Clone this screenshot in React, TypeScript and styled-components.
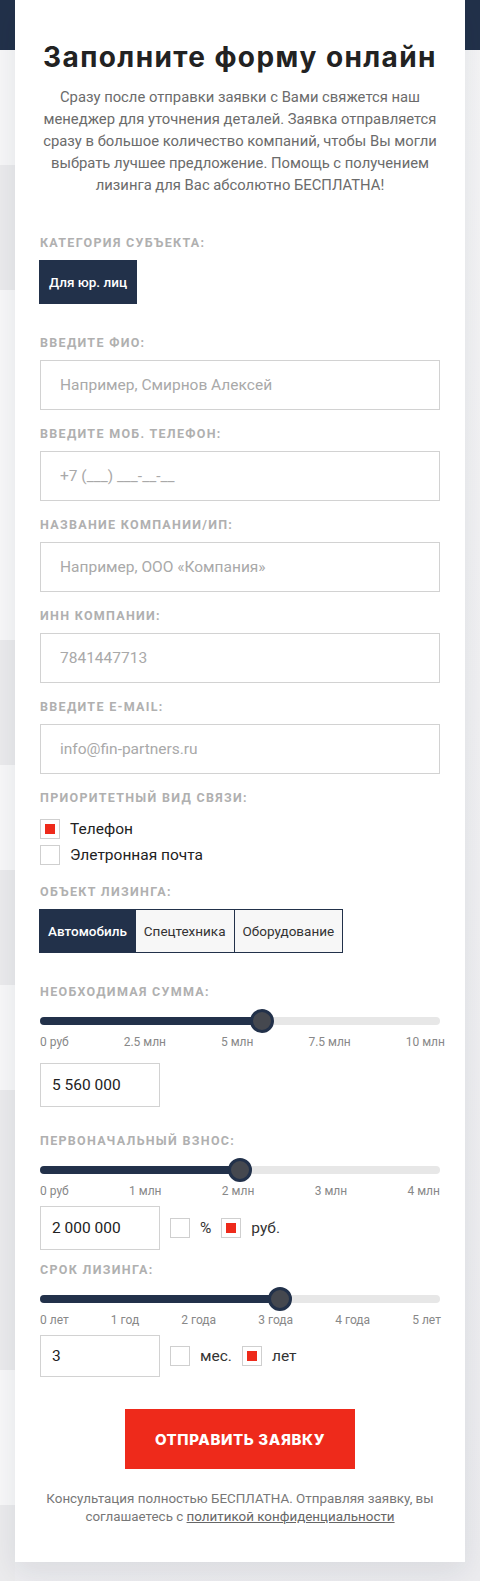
import styled, { createGlobalStyle } from "styled-components";

const NAVY = "#22314a";
const RED = "#ee2a1b";

const GlobalStyle = createGlobalStyle`
  html, body {
    margin: 0;
    padding: 0;
  }
  body {
    font-family: Roboto, "Liberation Sans", sans-serif;
    color: #222;
  }
  * {
    box-sizing: border-box;
  }
`;

const Page = styled.div`
  min-height: 1581px;
  padding: 0 15px 17px;
  background:
    linear-gradient(${NAVY}, ${NAVY}) top left / 100% 50px no-repeat,
    linear-gradient(
        to bottom,
        #f7f7f8 0 165px,
        #ebebed 165px 290px,
        #f8f8f9 290px 640px,
        #ebebed 640px 765px,
        #f8f8f9 765px 870px,
        #ebebed 870px 985px,
        #f8f8f9 985px 1090px,
        #ebebed 1090px 1370px,
        #f8f8f9 1370px 1505px,
        #ebebed 1505px
      )
      top left / 15px 100% no-repeat,
    linear-gradient(160deg, #f6f6f7 0%, #f1f1f3 50%, #ececef 100%);
`;

const Card = styled.form`
  background: #fff;
  padding: 40px 25px 36px;
  box-shadow: 0 10px 28px rgba(20, 30, 50, 0.09);
`;

const Title = styled.h2`
  margin: 0;
  font-family: Inter, "Open Sans", sans-serif;
  font-weight: 700;
  font-size: 28px;
  line-height: 34px;
  letter-spacing: 1.4px;
  text-align: center;
  white-space: nowrap;
  color: #222;
`;

const Lead = styled.p`
  margin: 12px 0 0;
  font-size: 14.8px;
  line-height: 22px;
  text-align: center;
  color: #6b6b6b;
`;

const Label = styled.div<{ $top?: number }>`
  margin-top: ${(p) => p.$top ?? 0}px;
  margin-bottom: 9px;
  font-size: 12.5px;
  line-height: 16px;
  font-weight: 700;
  letter-spacing: 1.3px;
  text-transform: uppercase;
  color: #b0b0b0;
`;

const SubjectButton = styled.button`
  display: block;
  height: 44px;
  margin-top: 1px;
  margin-left: -1px;
  padding: 0 10px;
  border: none;
  background: ${NAVY};
  color: #fff;
  font-family: inherit;
  font-size: 13.5px;
  font-weight: 500;
`;

const Field = styled.div`
  margin-bottom: 16px;
`;

const TextInput = styled.input<{ $w?: number; $h?: number; $pad?: number }>`
  display: block;
  width: ${(p) => (p.$w ? `${p.$w}px` : "100%")};
  height: ${(p) => p.$h ?? 50}px;
  padding: 0 ${(p) => p.$pad ?? 19}px;
  border: 1px solid #d2d2d2;
  background: #fff;
  font-family: inherit;
  font-size: 15.5px;
  color: #222;
  outline: none;

  &::placeholder {
    color: #a9a9a9;
  }
`;

const CheckRow = styled.label<{ $top?: number }>`
  display: flex;
  align-items: center;
  gap: 10px;
  margin-top: ${(p) => p.$top ?? 0}px;
  font-size: 15.5px;
  line-height: 20px;
  color: #222;
`;

const Box = styled.span<{ $checked?: boolean }>`
  position: relative;
  flex: none;
  width: 20px;
  height: 20px;
  border: 1px solid #cfcfcf;
  background: #fff;

  &::after {
    content: "";
    display: ${(p) => (p.$checked ? "block" : "none")};
    position: absolute;
    left: 4px;
    top: 4px;
    width: 10px;
    height: 10px;
    background: ${RED};
  }
`;

const Tabs = styled.div`
  display: flex;
  margin-left: -1px;
`;

const Tab = styled.button<{ $active?: boolean }>`
  height: 44px;
  padding: 0 8px;
  margin-left: -1px;
  border: 1px solid ${NAVY};
  background: ${(p) => (p.$active ? NAVY : "#f7f7f7")};
  color: ${(p) => (p.$active ? "#fff" : "#333")};
  font-family: inherit;
  font-size: 13.5px;
  font-weight: ${(p) => (p.$active ? 500 : 400)};

  &:first-child {
    margin-left: 0;
  }
`;

const Track = styled.div`
  position: relative;
  height: 24px;
  margin-top: 9px;
`;

const Rail = styled.div`
  position: absolute;
  left: 0;
  right: 0;
  top: 8px;
  height: 8px;
  border-radius: 4px;
  background: #e7e7e7;
`;

const Fill = styled.div`
  position: absolute;
  left: 0;
  top: 8px;
  height: 8px;
  border-radius: 4px;
  background: ${NAVY};
`;

const Thumb = styled.div`
  position: absolute;
  top: 0;
  width: 24px;
  height: 24px;
  margin-left: -12px;
  border-radius: 50%;
  border: 3px solid ${NAVY};
  background: #45484f;
`;

const Ticks = styled.div<{ $overhang?: number }>`
  display: flex;
  justify-content: space-between;
  margin-top: 2px;
  margin-right: -${(p) => p.$overhang ?? 0}px;
  font-size: 12px;
  line-height: 14px;
  color: #888;
`;

const ValueRow = styled.div<{ $top: number }>`
  display: flex;
  align-items: center;
  margin-top: ${(p) => p.$top}px;
`;

const UnitPick = styled.label`
  display: flex;
  align-items: center;
  gap: 10px;
  margin-left: 10px;
  font-size: 15.5px;
  color: #333;
`;

const Submit = styled.button`
  display: block;
  width: 230px;
  height: 60px;
  margin: 32px auto 0;
  border: none;
  background: ${RED};
  color: #fff;
  font-family: Inter, "Open Sans", sans-serif;
  font-size: 15px;
  font-weight: 800;
  letter-spacing: 0.6px;
  text-transform: uppercase;
`;

const Note = styled.p`
  margin: 21px 0 0;
  font-size: 13.4px;
  line-height: 18px;
  text-align: center;
  color: #777;

  a {
    color: #666;
    text-decoration: underline;
  }
`;

type SliderProps = {
  part: number;
  ticks: string[];
  overhang?: number;
};

const Slider = ({ part, ticks, overhang }: SliderProps) => (
  <>
    <Track>
      <Rail />
      <Fill style={{ width: `${part * 100}%` }} />
      <Thumb style={{ left: `${part * 100}%` }} />
    </Track>
    <Ticks $overhang={overhang}>
      {ticks.map((t) => (
        <span key={t}>{t}</span>
      ))}
    </Ticks>
  </>
);

const fields = [
  { label: "Введите ФИО:", placeholder: "Например, Смирнов Алексей" },
  { label: "Введите моб. телефон:", placeholder: "+7 (___) ___-__-__" },
  { label: "Название компании/ИП:", placeholder: "Например, ООО «Компания»" },
  { label: "ИНН компании:", placeholder: "7841447713" },
  { label: "Введите e-mail:", placeholder: "info@fin-partners.ru" },
];

const App = () => {
  return (
    <>
      <GlobalStyle />
      <Page>
        <Card onSubmit={(e) => e.preventDefault()}>
          <Title>Заполните форму онлайн</Title>
          <Lead>
            Сразу после отправки заявки с Вами свяжется наш
            <br />
            менеджер для уточнения деталей. Заявка отправляется
            <br />
            сразу в большое количество компаний, чтобы Вы могли
            <br />
            выбрать лучшее предложение. Помощь с получением
            <br />
            лизинга для Вас абсолютно БЕСПЛАТНА!
          </Lead>

          <Label $top={39}>Категория субъекта:</Label>
          <SubjectButton type="button">Для юр. лиц</SubjectButton>

          <Label $top={31}>{fields[0].label}</Label>
          {fields.map((f, i) => (
            <Field key={f.label}>
              {i > 0 && <Label>{f.label}</Label>}
              <TextInput placeholder={f.placeholder} />
            </Field>
          ))}

          <Label>Приоритетный вид связи:</Label>
          <CheckRow $top={13}>
            <Box $checked />
            Телефон
          </CheckRow>
          <CheckRow $top={6}>
            <Box />
            Элетронная почта
          </CheckRow>

          <Label $top={19}>Объект лизинга:</Label>
          <Tabs>
            <Tab type="button" $active>
              Автомобиль
            </Tab>
            <Tab type="button">Спецтехника</Tab>
            <Tab type="button">Оборудование</Tab>
          </Tabs>

          <Label $top={31}>Необходимая сумма:</Label>
          <Slider
            part={0.556}
            overhang={5}
            ticks={["0 руб", "2.5 млн", "5 млн", "7.5 млн", "10 млн"]}
          />
          <ValueRow $top={14}>
            <TextInput $w={120} $h={44} $pad={11} defaultValue="5 560 000" />
          </ValueRow>

          <Label $top={26}>Первоначальный взнос:</Label>
          <Slider part={0.5} ticks={["0 руб", "1 млн", "2 млн", "3 млн", "4 млн"]} />
          <ValueRow $top={8}>
            <TextInput $w={120} $h={44} $pad={11} defaultValue="2 000 000" />
            <UnitPick>
              <Box />%
            </UnitPick>
            <UnitPick>
              <Box $checked />
              руб.
            </UnitPick>
          </ValueRow>

          <Label $top={12}>Срок лизинга:</Label>
          <Slider
            part={0.6}
            overhang={1}
            ticks={["0 лет", "1 год", "2 года", "3 года", "4 года", "5 лет"]}
          />
          <ValueRow $top={8}>
            <TextInput $w={120} $h={42} $pad={11} defaultValue="3" />
            <UnitPick>
              <Box />
              мес.
            </UnitPick>
            <UnitPick>
              <Box $checked />
              лет
            </UnitPick>
          </ValueRow>

          <Submit type="submit">Отправить заявку</Submit>
          <Note>
            Консультация полностью БЕСПЛАТНА. Отправляя заявку, вы
            <br />
            соглашаетесь с <a href="#privacy">политикой конфиденциальности</a>
          </Note>
        </Card>
      </Page>
    </>
  );
};

export default App;
